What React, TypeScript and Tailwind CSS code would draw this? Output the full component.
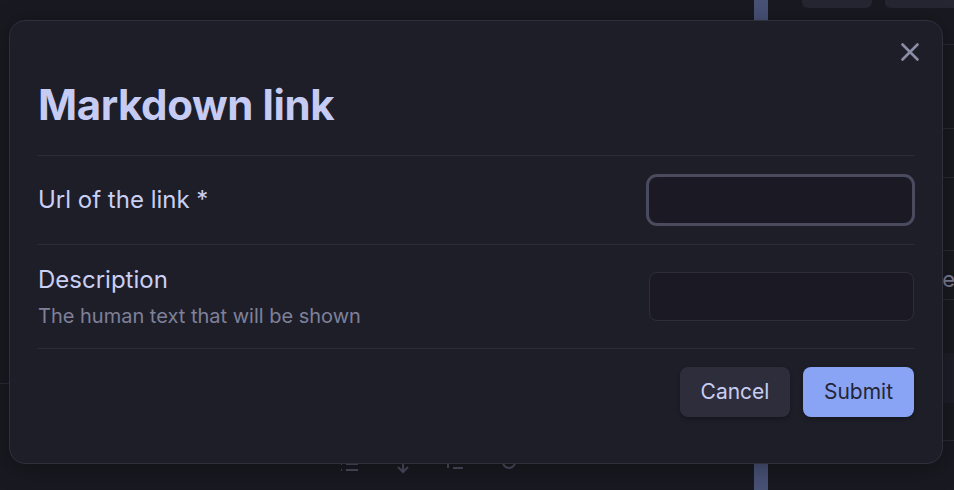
import React from "react";

function CloseIcon() {
  return (
    <svg width="20" height="20" viewBox="0 0 20 20" fill="none">
      <path d="M2.5 2.5L17.5 17.5M17.5 2.5L2.5 17.5" stroke="#8b8da8" strokeWidth="2.6" strokeLinecap="round" />
    </svg>
  );
}

function Background() {
  return (
    <div className="flex h-full w-full">
      <div className="relative flex w-[754px] flex-col">
        <div className="flex-1" />
        <div className="h-px w-[12px] bg-[#2a2a36] mb-[72px]" />
        <div className="flex items-start justify-center gap-[34px] pl-[104px] pb-[14px] text-[#4b4c5e]">
          <svg width="24" height="20" viewBox="0 0 24 20" fill="none" stroke="currentColor" strokeWidth="2">
            <path d="M4 8h1M9 8h12M4 14h1M9 14h12" />
          </svg>
          <svg width="16" height="20" viewBox="0 0 16 20" fill="none" stroke="currentColor" strokeWidth="2">
            <path d="M8 2v14M3 11l5 5 5-5" />
          </svg>
          <svg width="20" height="20" viewBox="0 0 20 20" fill="none" stroke="currentColor" strokeWidth="2">
            <path d="M3 4v8M8 6h10M8 12h10" />
          </svg>
          <svg width="22" height="20" viewBox="0 0 22 20" fill="none" stroke="currentColor" strokeWidth="2">
            <circle cx="10" cy="6" r="6" />
          </svg>
        </div>
      </div>
      <div className="w-[14px] bg-[#485276]" />
      <div className="flex flex-1 flex-col pl-[34px]">
        <div className="flex gap-[13px]">
          <div className="h-[8px] w-[70px] rounded-b-[6px] bg-[#262632]" />
          <div className="h-[8px] flex-1 rounded-bl-[6px] bg-[#262632]" />
        </div>
        <div className="mt-[36px] h-px bg-[#2a2a36]" />
        <div className="mt-[83px] h-px bg-[#2a2a36]" />
        <div className="mt-[48px] h-px bg-[#2a2a36]" />
        <div className="mt-[72px] h-px bg-[#2a2a36]" />
        <div className="mt-[48px] h-px bg-[#2a2a36]" />
        <div className="mt-[53px] h-[50px] bg-[#1e1e28]" />
        <div className="mt-[37px] h-px bg-[#2a2a36]" />
      </div>
      <div className="absolute right-[-1px] top-[263px] text-[22px] text-[#7d7f96]" style={{ fontFamily: "Inter, sans-serif" }}>
        e
      </div>
    </div>
  );
}

export default function App() {
  return (
    <div
      className="relative h-[490px] w-[954px] overflow-hidden bg-[#191921]"
      style={{ fontFamily: "Inter, 'Noto Sans', sans-serif" }}
    >
      <Background />
      <div className="absolute left-[9px] top-[20px] flex h-[444px] w-[934px] flex-col rounded-[16px] border border-[#2f2f3d] bg-[#1e1e29] px-[28px] shadow-[0_4px_24px_rgba(0,0,0,0.35)]">
        <button className="absolute right-[22px] top-[21px]">
          <CloseIcon />
        </button>
        <h1 className="mt-[59px] text-[42px] font-bold leading-[50px] tracking-[-0.4px] text-[#c6cbf4]">
          Markdown link
        </h1>
        <div className="mt-[25px] h-px bg-[#2d2d3a]" />
        <div className="flex h-[88px] items-center justify-between">
          <div className="text-[24px] text-[#cacff4]">Url of the link *</div>
          <div className="mr-[-1px] h-[52px] w-[269px] rounded-[11px] border-[3px] border-[#4b4b60] bg-[#1b1a24]" />
        </div>
        <div className="h-px bg-[#2d2d3a]" />
        <div className="flex h-[103px] items-center justify-between">
          <div className="flex flex-col gap-[8px]">
            <div className="text-[24px] leading-[30px] text-[#cacff4]">Description</div>
            <div className="text-[20px] leading-[26px] text-[#7e8199]">The human text that will be shown</div>
          </div>
          <div className="h-[49px] w-[265px] rounded-[8px] border border-[#2e2e3a] bg-[#1b1a24]" />
        </div>
        <div className="h-px bg-[#2d2d3a]" />
        <div className="mt-[18px] flex justify-end gap-[13px]">
          <button className="h-[50px] w-[110px] rounded-[8px] bg-[#2e2d3b] text-[21px] text-[#c8cdf2] shadow-[0_2px_4px_rgba(0,0,0,0.3)]">
            Cancel
          </button>
          <button className="h-[50px] w-[111px] rounded-[8px] bg-[#89a4f4] text-[21px] text-[#242536] shadow-[0_2px_4px_rgba(0,0,0,0.3)]">
            Submit
          </button>
        </div>
      </div>
    </div>
  );
}
